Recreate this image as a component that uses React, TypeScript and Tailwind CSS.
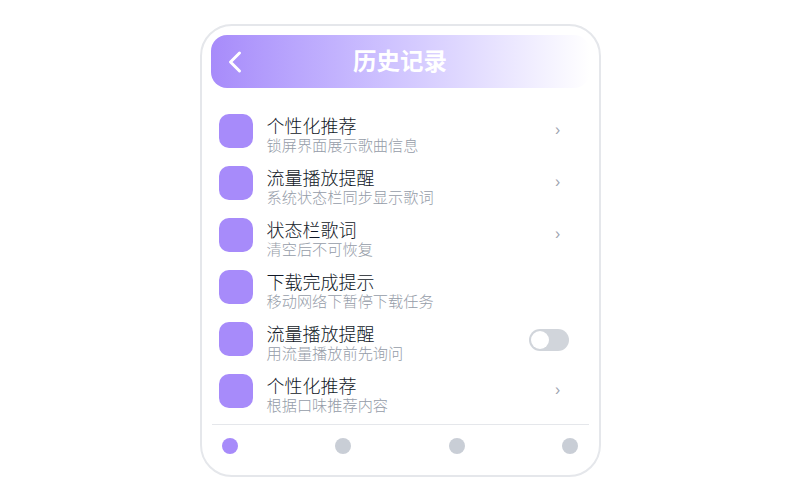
import { ChevronLeft } from 'lucide-react';

interface Item {
  title: string;
  sub: string;
  toggle?: boolean;
}

const items: Item[] = [
  { title: '个性化推荐', sub: '锁屏界面展示歌曲信息' },
  { title: '流量播放提醒', sub: '系统状态栏同步显示歌词' },
  { title: '状态栏歌词', sub: '清空后不可恢复' },
  { title: '下载完成提示', sub: '移动网络下暂停下载任务' },
  { title: '流量播放提醒', sub: '用流量播放前先询问', toggle: true },
  { title: '个性化推荐', sub: '根据口味推荐内容' },
];

const Row = ({ item, index }: { item: Item; index: number }) => (
  <div className="flex h-[52px] items-center pl-[7px] pr-5">
    <div className="h-[34px] w-[34px] shrink-0 rounded-[10px] bg-[#a78bfa]" />
    <div className="ml-[14px] flex-1 pt-[8px] font-light">
      <div className="text-[18px] leading-[22px] text-[#111827]">{item.title}</div>
      <div className="text-[15.2px] leading-[16px] text-[#959ca8]">{item.sub}</div>
    </div>
    {item.toggle ? (
      <div className="mt-[2px] flex h-[22px] w-10 items-center rounded-full bg-[#d1d5db] p-[2px]">
        <div className="h-[18px] w-[18px] rounded-full bg-white" />
      </div>
    ) : (
      index !== 3 && <span className="mb-[2px] mr-[8px] text-[14px] leading-none text-[#9ca3af]">›</span>
    )}
  </div>
);

const App = () => {
  return (
    <div
      className="flex h-[500px] w-[800px] items-start justify-center bg-white pt-6"
      style={{ fontFamily: '"Inter", "Noto Sans CJK SC", sans-serif' }}
    >
      <div className="flex h-[453px] w-[401px] flex-col rounded-[32px] border-2 border-[#e5e7eb] bg-white px-[9px] pt-[9px]">
        <div className="relative flex h-[53px] items-center justify-center rounded-2xl bg-gradient-to-r from-[#a78bfa] to-white">
          <ChevronLeft className="absolute left-[6px] top-[9px] h-9 w-9 text-white" strokeWidth={2} />
          <span className="text-[23.5px] font-bold text-white">历史记录</span>
        </div>
        <div className="mt-[17px] px-px">
          {items.map((item, i) => (
            <Row key={i} item={item} index={i} />
          ))}
        </div>
        <div className="mx-px mt-[7px] flex items-center justify-between border-t border-[#e5e7eb] px-[10px] pt-[13px]">
          <div className="h-4 w-4 rounded-full bg-[#a78bfa]" />
          <div className="h-4 w-4 rounded-full bg-[#c9ced6]" />
          <div className="h-4 w-4 rounded-full bg-[#c9ced6]" />
          <div className="h-4 w-4 rounded-full bg-[#c9ced6]" />
        </div>
      </div>
    </div>
  );
};

export default App;
